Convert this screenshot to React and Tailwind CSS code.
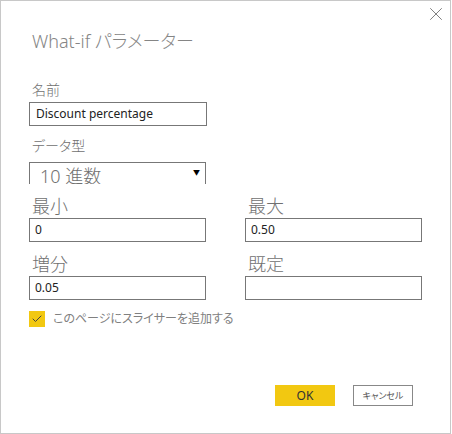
import { Check, X } from 'lucide-react'

const font = { fontFamily: '"Segoe UI", "Noto Sans", "Noto Sans CJK JP", sans-serif' }

function Field({ label, value, className = '' }) {
  return (
    <div className={`flex flex-col w-[178px] ${className}`}>
      <span className="pl-[3px] text-[18px] leading-[22px] font-light text-[#707070] [font-feature-settings:'palt']">{label}</span>
      <div className="mt-[1px] h-[24px] border border-[#777] px-[5px] flex items-center text-[12px] text-[#222]">{value}</div>
    </div>
  )
}

export default function App() {
  return (
    <div style={font} className="relative w-[451px] h-[434px] border border-[#c8c8c8] bg-white">
      <button className="absolute top-[2px] right-[3px] w-[22px] h-[22px] flex items-center justify-center text-[#666]">
        <X size={22} strokeWidth={0.9} />
      </button>
      <div className="flex flex-col px-[28px] pt-[28px]">
        <h1 className="pl-[3px] h-[24px] text-[18px] leading-[24px] font-light text-[#858585] [font-feature-settings:'palt']">
          What-if パラメーター
        </h1>

        <span className="mt-[27px] pl-[3px] text-[14px] leading-[20px] font-light text-[#707070]">名前</span>
        <div className="mt-[2px] w-[178px] h-[24px] border border-[#777] px-[6px] flex items-center text-[12px] text-[#222]">
          Discount percentage
        </div>

        <span className="mt-[10px] pl-[3px] text-[14px] leading-[20px] font-light text-[#707070] [font-feature-settings:'palt']">データ型</span>
        <div className="mt-[6px] w-[177px] h-[22px] border-t border-x border-[#777] overflow-hidden relative">
          <span className="absolute left-[10px] top-[1px] text-[18px] leading-[24px] font-light text-[#707070]">10 進数</span>
          <span className="absolute right-[5px] top-[5px] text-[7px] text-black">▼</span>
        </div>

        <div className="mt-[11px] flex gap-[39px]">
          <Field label="最小" value="0" />
          <Field label="最大" value="0.50" />
        </div>
        <div className="mt-[11px] flex gap-[39px]">
          <Field label="増分" value="0.05" />
          <Field label="既定" value="" />
        </div>

        <label className="mt-[10px] flex items-center gap-[8px]">
          <span className="w-[16px] h-[16px] bg-[#f2c811] flex items-center justify-center text-[#444]">
            <Check size={12} strokeWidth={2} />
          </span>
          <span className="text-[12px] text-[#808080] [font-feature-settings:'palt']">このページにスライサーを追加する</span>
        </label>

        <div className="mt-[57px] flex justify-end gap-[18px] pr-[9px]">
          <button className="w-[60px] h-[21px] bg-[#f2c811] text-[12px] text-[#333] flex items-center justify-center">OK</button>
          <button className="w-[60px] h-[21px] border border-[#888] text-[9px] text-[#555] flex items-center justify-center [font-feature-settings:'palt']">キャンセル</button>
        </div>
      </div>
    </div>
  )
}
